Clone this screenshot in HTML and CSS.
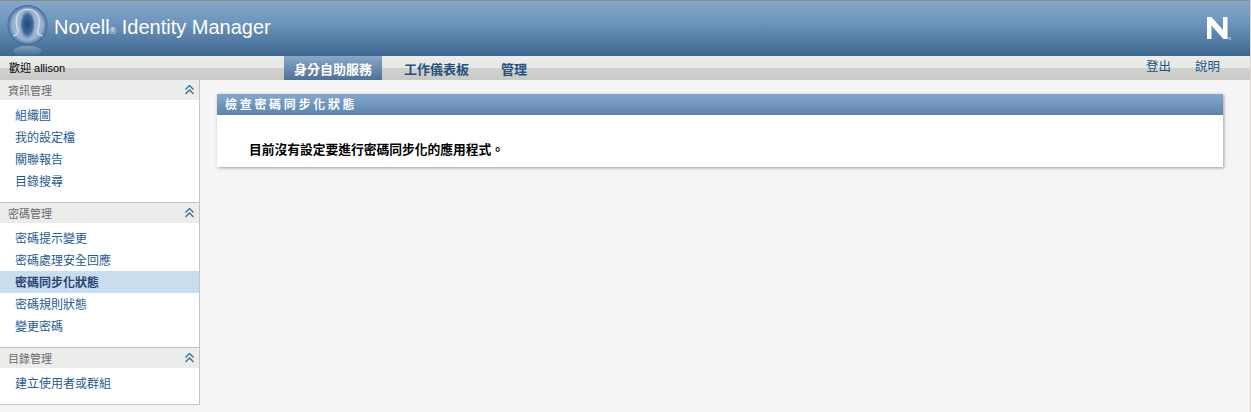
FILE: index.html
```html
<!DOCTYPE html>
<html lang="zh-Hant">
<head>
<meta charset="utf-8">
<title>Novell Identity Manager</title>
<link rel="stylesheet" href="styles.css">
</head>
<body>
<div class="page">
  <header class="banner">
    <svg class="logo" width="44" height="55" viewBox="0 0 44 55">
      <defs>
        <radialGradient id="orb" cx="50%" cy="50%" r="50%">
          <stop offset="0" stop-color="#a9bfd8"/>
          <stop offset="0.75" stop-color="#9ab3d0"/>
          <stop offset="0.92" stop-color="#5f84ae"/>
          <stop offset="1" stop-color="#3a6391"/>
        </radialGradient>
        <linearGradient id="refl" x1="0" y1="0" x2="0" y2="1">
          <stop offset="0" stop-color="#a8bfd6" stop-opacity=".55"/>
          <stop offset="1" stop-color="#a8bfd6" stop-opacity="0"/>
        </linearGradient>
        <radialGradient id="head" cx="50%" cy="45%" r="55%">
          <stop offset="0" stop-color="#1f4a80"/>
          <stop offset="0.6" stop-color="#3f6a9c"/>
          <stop offset="1" stop-color="#8faaca" stop-opacity="0"/>
        </radialGradient>
      </defs>
      <circle cx="21.500" cy="24" r="20" fill="url(#orb)"/>
      <ellipse cx="21.500" cy="50" rx="14" ry="5" fill="url(#refl)"/>
      <ellipse cx="21.500" cy="25" rx="8" ry="15" fill="url(#head)"/>
      <path d="M7 35C10 34 13 33 12 29C9 22 9 9 21 8C33 8 35 20 32 29C30 33 33 34 37 35" fill="none" stroke="#eef3f8" stroke-width="1.200" opacity=".75"/>
    </svg>
    <div class="product">Novell<span class="reg">®</span> Identity Manager</div>
    <svg class="n-logo" width="26" height="24" viewBox="0 0 26 24">
      <path d="M1 1H5.500L17 14V1H21.500V23H17.500L5.500 9.500V23H1Z" fill="#fff"/>
      <circle cx="23.500" cy="22.500" r="1.200" fill="none" stroke="#d5e0ea" stroke-width=".7"/>
    </svg>
  </header>

  <nav class="navbar">
    <div class="welcome">歡迎 allison</div>
    <div class="tabs">
      <a class="tab tab-active">身分自助服務</a>
      <a class="tab">工作儀表板</a>
      <a class="tab">管理</a>
    </div>
    <div class="utils">
      <a class="util">登出</a>
      <a class="util">說明</a>
    </div>
  </nav>

  <div class="content">
    <aside class="sidebar">
      <section class="group">
        <h2 class="group-head">資訊管理
          <svg class="chev" width="9" height="10" viewBox="0 0 9 10"><path d="M.5 4.500L4.500 .5L8.500 4.500M.5 9L4.500 5L8.500 9" fill="none" stroke="#3b6a9c" stroke-width="1.300"/></svg>
        </h2>
        <ul class="links">
          <li>組織圖</li>
          <li>我的設定檔</li>
          <li>關聯報告</li>
          <li>目錄搜尋</li>
        </ul>
      </section>
      <section class="group">
        <h2 class="group-head">密碼管理
          <svg class="chev" width="9" height="10" viewBox="0 0 9 10"><path d="M.5 4.500L4.500 .5L8.500 4.500M.5 9L4.500 5L8.500 9" fill="none" stroke="#3b6a9c" stroke-width="1.300"/></svg>
        </h2>
        <ul class="links">
          <li>密碼提示變更</li>
          <li>密碼處理安全回應</li>
          <li class="current">密碼同步化狀態</li>
          <li>密碼規則狀態</li>
          <li>變更密碼</li>
        </ul>
      </section>
      <section class="group">
        <h2 class="group-head">目錄管理
          <svg class="chev" width="9" height="10" viewBox="0 0 9 10"><path d="M.5 4.500L4.500 .5L8.500 4.500M.5 9L4.500 5L8.500 9" fill="none" stroke="#3b6a9c" stroke-width="1.300"/></svg>
        </h2>
        <ul class="links">
          <li>建立使用者或群組</li>
        </ul>
      </section>
    </aside>

    <main class="main">
      <div class="panel">
        <h1 class="panel-head">檢查密碼同步化狀態</h1>
        <p class="panel-body">目前沒有設定要進行密碼同步化的應用程式。</p>
      </div>
    </main>
  </div>
</div>
</body>
</html>
```
FILE: styles.css
```css
* { box-sizing: border-box; }
html, body { margin: 0; padding: 0; height: 100%; }
body {
  background: #d8d4d0;
  font-family: "Noto Sans CJK TC", "Liberation Sans", sans-serif;
  overflow: hidden;
}
.page {
  width: 1250px;
  height: 412px;
  display: flex;
  flex-direction: column;
  background: #f5f5f5;
}
.banner {
  height: 56px;
  flex: none;
  display: flex;
  align-items: flex-start;
  border-top: 1px solid #8a8a8a;
  background: linear-gradient(#86a8c9, #6f97bf 35%, #3f6890);
  overflow: hidden;
}
.logo { margin: 0 0 0 6px; flex: none; }
.product {
  margin: 12px 0 0 4px;
  color: #fff;
  font: 20px/28px "Liberation Sans", sans-serif;
  flex: 1;
}
.reg { font-size: 9px; }
.n-logo { margin: 15px 18px 0 0; flex: none; }
.navbar {
  height: 24px;
  flex: none;
  display: flex;
  background: linear-gradient(#ebedeb, #e6e8e6 50%, #d2d3d0 50%, #c8c9c6);
}
.welcome {
  width: 284px;
  padding-left: 9px;
  font: 11px/24px "Liberation Sans", "Noto Sans CJK TC", sans-serif;
  color: #000;
  flex: none;
}
.tabs { display: flex; flex: 1; font-size: 13px; font-weight: 700; }
.tab {
  padding: 0 10px;
  margin-right: 12px;
  line-height: 26px;
  color: #24507c;
}
.tab-active {
  color: #fff;
  background: linear-gradient(#8ba8c6, #4d7199);
}
.utils { display: flex; gap: 24px; padding: 0 30px 0 0; }
.util { font-size: 12.500px; line-height: 20px; color: #24507c; }
.content { flex: 1; display: flex; min-height: 0; }
.sidebar {
  width: 200px;
  flex: none;
  height: 325px;
  background: #fff;
  border-right: 1px solid #c4c4c4;
  border-bottom: 1px solid #c4c4c4;
}
.group + .group { border-top: 1px solid #c4c4c4; }
.group-head {
  margin: 0;
  height: 20px;
  padding: 0 5px 0 8px;
  display: flex;
  justify-content: space-between;
  align-items: center;
  background: #ebedeb;
  color: #6a6a6a;
  font-size: 11px;
  font-weight: 400;
}
.chev { flex: none; }
.links { list-style: none; margin: 0; padding: 4px 0 10px; }
.links li {
  height: 22px;
  line-height: 22px;
  padding-left: 15px;
  font-size: 12px;
  color: #1f5a93;
}
.links li.current {
  background: #c9ddf1;
  color: #24466e;
  font-weight: 700;
}
.main { flex: 1; padding: 14px 27px 0 17px; }
.panel {
  background: #fff;
  height: 73px;
  box-shadow: 1px 1px 3px rgba(0,0,0,.35);
}
.panel-head {
  margin: 0;
  height: 21px;
  padding-left: 8px;
  color: #fff;
  font-size: 12px;
  line-height: 20px;
  font-weight: 700;
  letter-spacing: 2.700px;
  background: linear-gradient(#85a8ca, #5a85ad);
}
.panel-body {
  margin: 0;
  padding: 25px 0 0 32px;
  font-size: 12.750px;
  line-height: 18px;
  font-weight: 700;
  color: #000;
}
```
